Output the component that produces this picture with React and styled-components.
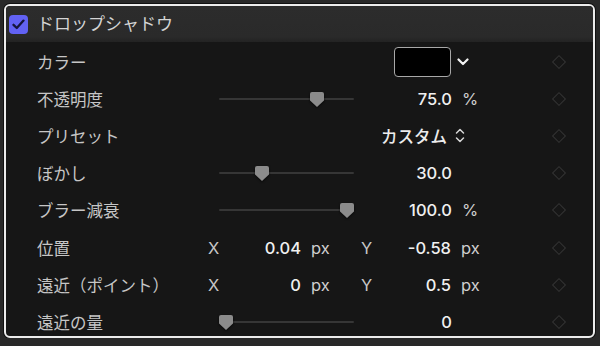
import React from 'react';
import styled, { createGlobalStyle } from 'styled-components';

const GlobalStyle = createGlobalStyle`
    html, body {
        margin: 0;
        padding: 0;
        background: #282828;
    }
    body {
        font-family: "Inter", "Noto Sans CJK JP", sans-serif;
        -webkit-font-smoothing: antialiased;
    }
`;

const sliderRows = {
    opacity: 0.75,
    blur: 0.3,
    falloff: 1,
    amount: 0,
};

const Checkbox = () => (
    <CheckBox>
        <svg width="13" height="11" viewBox="0 0 13 11">
            <path d="M1.5 5.8 L4.8 9 L11.5 1.6" fill="none" stroke="#15153d" strokeWidth="2.3" strokeLinecap="round" strokeLinejoin="round" />
        </svg>
    </CheckBox>
);

const Slider = ({ value }) => (
    <Track>
        <Thumb style={{ left: `${7 + value * 121}px` }}>
            <svg width="14" height="15" viewBox="0 0 14 15">
                <path d="M2 0 H12 Q14 0 14 2 V8.5 L7 15 L0 8.5 V2 Q0 0 2 0 Z" fill="#8b8b8b" />
            </svg>
        </Thumb>
    </Track>
);

const ChevronDown = () => (
    <svg width="12" height="8" viewBox="0 0 12 8">
        <path d="M1.5 1.5 L6 6 L10.5 1.5" fill="none" stroke="#f2f2f2" strokeWidth="2.2" strokeLinecap="round" strokeLinejoin="round" />
    </svg>
);

const UpDown = () => (
    <svg width="10" height="15" viewBox="0 0 10 15">
        <path d="M1.5 5 L5 1.5 L8.5 5" fill="none" stroke="#d6d6d6" strokeWidth="1.5" strokeLinecap="round" strokeLinejoin="round" />
        <path d="M1.5 10 L5 13.5 L8.5 10" fill="none" stroke="#d6d6d6" strokeWidth="1.5" strokeLinecap="round" strokeLinejoin="round" />
    </svg>
);

const SliderRow = ({ label, fraction, value, unit }) => (
    <Row>
        <Label>{label}</Label>
        <SliderControl>
            <Slider value={fraction} />
            <Value $width={98}>{value}</Value>
            {unit && <Unit>{unit}</Unit>}
        </SliderControl>
        <Keyframe />
    </Row>
);

const PointRow = ({ label, x, y }) => (
    <Row>
        <Label>{label}</Label>
        <PointControl>
            <Axis>X</Axis>
            <Value>{x}</Value>
            <Unit>px</Unit>
            <Axis>Y</Axis>
            <Value>{y}</Value>
            <Unit>px</Unit>
        </PointControl>
        <Keyframe />
    </Row>
);

const App = () => {
    return (
        <>
            <GlobalStyle />
            <Panel>
                <Header>
                    <Checkbox />
                    <Title>ドロップシャドウ</Title>
                </Header>
                <Body>
                    <Row>
                        <Label>カラー</Label>
                        <EndControl $width={264}>
                            <Swatch />
                            <ChevronDown />
                        </EndControl>
                        <Keyframe />
                    </Row>
                    <SliderRow label="不透明度" fraction={sliderRows.opacity} value="75.0" unit="%" />
                    <Row>
                        <Label>プリセット</Label>
                        <EndControl $width={260} $gap={8}>
                            <PresetName>カスタム</PresetName>
                            <UpDown />
                        </EndControl>
                        <Keyframe />
                    </Row>
                    <SliderRow label="ぼかし" fraction={sliderRows.blur} value="30.0" />
                    <SliderRow label="ブラー減衰" fraction={sliderRows.falloff} value="100.0" unit="%" />
                    <PointRow label="位置" x="0.04" y="-0.58" />
                    <PointRow label="遠近（ポイント）" x="0" y="0.5" />
                    <SliderRow label="遠近の量" fraction={sliderRows.amount} value="0" />
                </Body>
            </Panel>
        </>
    );
};

const Panel = styled.div`
    box-sizing: border-box;
    margin: 4px 0 0 4px;
    width: 591px;
    height: 334px;
    border: 2px solid #ececec;
    border-radius: 6px;
    box-shadow: 0 0 0 1px #101010;
    background: #161616;
    overflow: hidden;
    display: flex;
    flex-direction: column;
`;

const Header = styled.div`
    height: 36px;
    flex-shrink: 0;
    display: flex;
    align-items: center;
    gap: 9px;
    padding-left: 3px;
    background: linear-gradient(#2c2c2c, #2a2a2a 85%, #232323);
`;

const CheckBox = styled.div`
    width: 19px;
    height: 19px;
    border-radius: 4px;
    background: #6262f4;
    display: flex;
    align-items: center;
    justify-content: center;
`;

const Title = styled.span`
    font-family: "Noto Sans CJK JP", sans-serif;
    font-size: 17px;
    color: #d4d4d4;
    line-height: 1;
    margin-top: -3px;
`;

const Body = styled.div`
    padding-top: 1px;
`;

const Row = styled.div`
    height: 37.2px;
    display: grid;
    grid-template-columns: 168px 1fr 20px;
    align-items: center;
    padding: 0 24px 0 31px;
`;

const Label = styled.span`
    font-family: "Noto Sans CJK JP", sans-serif;
    font-size: 16.5px;
    color: #c6c6c6;
    white-space: nowrap;
`;

const Value = styled.span`
    font-size: 16.5px;
    font-weight: 500;
    color: #f0f0f0;
    text-align: right;
    white-space: nowrap;
    ${({ $width }) => $width && `width: ${$width}px;`}
`;

const PresetName = styled.span`
    font-family: "Noto Sans CJK JP", sans-serif;
    font-size: 16.5px;
    font-weight: 500;
    color: #ececec;
`;

const Unit = styled.span`
    font-size: 16.5px;
    color: #cfcfcf;
    padding-left: 10px;
`;

const Axis = styled.span`
    font-size: 16.5px;
    color: #c6c6c6;
    padding-left: 3px;
`;

const SliderControl = styled.div`
    display: flex;
    align-items: center;
`;

const Track = styled.div`
    position: relative;
    margin-left: 14px;
    width: 135px;
    height: 2px;
    border-radius: 1px;
    background: #363636;
`;

const Thumb = styled.div`
    position: absolute;
    top: -6px;
    transform: translateX(-7px);
    display: flex;
    filter: drop-shadow(0 1px 1px rgba(0, 0, 0, 0.7));
`;

const PointControl = styled.div`
    display: grid;
    grid-template-columns: 20px 76px 57px 17px 76px auto;
    align-items: center;
`;

const EndControl = styled.div`
    width: ${({ $width }) => $width}px;
    display: flex;
    align-items: center;
    justify-content: flex-end;
    gap: ${({ $gap }) => $gap ?? 6}px;
`;

const Swatch = styled.div`
    box-sizing: border-box;
    width: 57px;
    height: 30px;
    border: 1.5px solid #a8a8a8;
    border-radius: 4px;
    background: #000;
`;

const Keyframe = styled.div`
    justify-self: center;
    width: 10px;
    height: 10px;
    box-sizing: border-box;
    border: 1.5px solid #343434;
    transform: rotate(45deg);
`;

export default App;
